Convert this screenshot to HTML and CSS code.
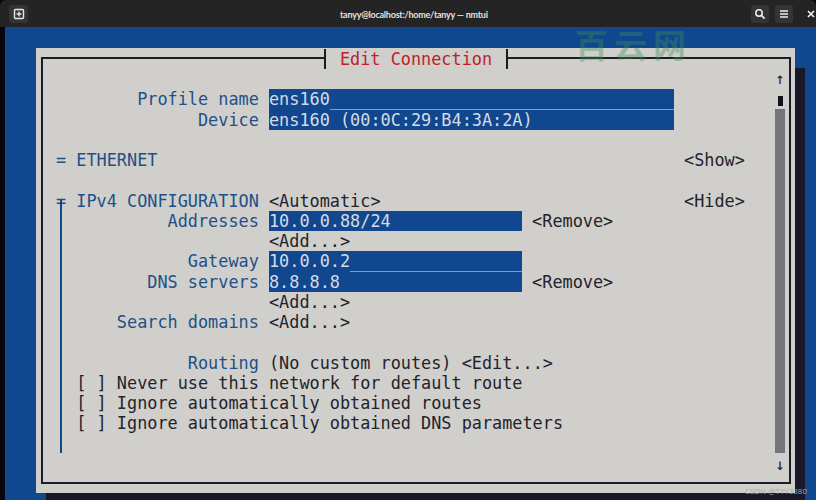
FILE: index.html
```html
<!DOCTYPE html>
<html lang="en">
<head>
<meta charset="utf-8">
<title>nmtui</title>
<link rel="stylesheet" href="styles.css">
</head>
<body>
<div class="window">
  <header class="titlebar">
    <button class="tbtn first">
      <svg width="12" height="12" viewBox="0 0 12 12"><rect x="1.5" y="1.5" width="9" height="9" rx="1" fill="none" stroke="#e8e8e8" stroke-width="1.4"/><path d="M6 3.6v4.8M3.6 6h4.8" stroke="#e8e8e8" stroke-width="1.4"/></svg>
    </button>
    <div class="wintitle">tanyy@localhost:/home/tanyy — nmtui</div>
    <div class="tools">
      <button class="tbtn">
        <svg width="12" height="12" viewBox="0 0 12 12"><circle cx="5" cy="5" r="3.2" fill="none" stroke="#eee" stroke-width="1.5"/><path d="M7.4 7.4l3.2 3.2" stroke="#eee" stroke-width="1.7"/></svg>
      </button>
      <button class="tbtn">
        <svg width="12" height="12" viewBox="0 0 12 12"><path d="M2 3h8M2 6h8M2 9h8" stroke="#eee" stroke-width="1.3"/></svg>
      </button>
      <svg class="close" width="10" height="10" viewBox="0 0 10 10"><path d="M2 2l6 6M8 2l-6 6" stroke="#eee" stroke-width="1.7"/></svg>
    </div>
  </header>
  <main class="terminal">
    <section class="dialog">
      <div class="frame">
        <h1 class="dtitle">Edit Connection</h1>
        <div class="form">
          <div class="rows">
<div class="row"></div>
<div class="row"><span class="lbl">        Profile name </span><span class="field w40"><span>ens160</span><span class="fill"></span></span></div>
<div class="row"><span class="lbl">              Device </span><span class="field w40"><span>ens160 (00:0C:29:B4:3A:2A)</span></span></div>
<div class="row"></div>
<div class="row"><span class="lbl">= ETHERNET</span><span class="right">&lt;Show&gt;</span></div>
<div class="row"></div>
<div class="row"><span class="lbl">= IPv4 CONFIGURATION </span>&lt;Automatic&gt;<span class="right">&lt;Hide&gt;</span></div>
<div class="row"><span class="lbl">           Addresses </span><span class="field w25"><span>10.0.0.88/24</span></span> &lt;Remove&gt;</div>
<div class="row">                     &lt;Add...&gt;</div>
<div class="row"><span class="lbl">             Gateway </span><span class="field w25"><span>10.0.0.2</span><span class="fill"></span></span></div>
<div class="row"><span class="lbl">         DNS servers </span><span class="field w25"><span>8.8.8.8</span></span> &lt;Remove&gt;</div>
<div class="row">                     &lt;Add...&gt;</div>
<div class="row"><span class="lbl">      Search domains </span>&lt;Add...&gt;</div>
<div class="row"></div>
<div class="row"><span class="lbl">             Routing </span>(No custom routes) &lt;Edit...&gt;</div>
<div class="row">  [ ] Never use this network for default route</div>
<div class="row">  [ ] Ignore automatically obtained routes</div>
<div class="row">  [ ] Ignore automatically obtained DNS parameters</div>
            <div class="branch"></div>
          </div>
          <div class="scroll">
            <div class="arrow">↑</div>
            <div class="track"><div class="thumb"></div><div class="bar"></div></div>
            <div class="arrow down">↓</div>
          </div>
        </div>
      </div>
    </section>
    <div class="watermark">百云网</div>
    <div class="credit">CSDN @TYY3380</div>
  </main>
</div>
</body>
</html>
```
FILE: styles.css
```css
* { box-sizing: border-box; }
html, body { margin: 0; height: 100%; background: #06060c; overflow: hidden; }
.window { width: 816px; height: 500px; display: flex; flex-direction: column; padding-left: 5px; overflow: hidden; }
.titlebar {
  height: 27px; flex: none; margin-left: -5px; background: #242424; border-radius: 6px 6px 0 0;
  display: flex; align-items: center; padding: 0 0 0 9px; position: relative;
  font-family: "Lato", sans-serif;
}
.tbtn {
  width: 18px; height: 18px; border: 0; padding: 0; border-radius: 3px; background: #343434;
  display: flex; align-items: center; justify-content: center;
}
.first { width: 19px; }
.wintitle {
  position: absolute; left: 340px; top: 8px; font-size: 9px; font-weight: 700; letter-spacing: -.24px;
  line-height: 13px; color: #e0e0e0; white-space: nowrap;
}
.tools { margin-left: auto; display: flex; align-items: center; gap: 6px; }
.close { margin-left: 7px; }
.terminal {
  flex: 1; background: #10478f; position: relative; padding: 21px 0 0 31px;
}
.dialog {
  width: 759px; height: 445px; background: #d0cfcb; padding: 9px 4px 9px 5px;
  box-shadow: 10px 20px 0 #191828;
}
.frame {
  height: 100%; border: 2px solid #1c1c24; position: relative; padding: 10px 0 0 13px;
}
.dtitle {
  position: absolute; left: 281px; top: -10px; margin: 0; width: 184px; height: 20px;
  background: #d0cfcb; border-left: 2px solid #1c1c24; border-right: 2px solid #1c1c24;
  font: 400 16.85px/20px "DejaVu Sans Mono", monospace; color: #c01c2c;
  text-align: center;
}
.form { display: flex; font: 400 16.85px/20.25px "DejaVu Sans Mono", monospace; color: #23232b; }
.rows { width: 719px; position: relative; }
.row { height: 20.25px; white-space: pre; position: relative; }
.lbl { color: #1f5088; }
.right { position: absolute; left: 628px; top: 0; }
.field {
  display: inline-flex; height: 20.25px; background: #10478f; color: #d6dbe4; vertical-align: top;
}
.w40 { width: 405px; }
.w25 { width: 253px; }
.fill { flex: 1; border-bottom: 1px solid #7f9fc6; }
.branch { position: absolute; left: 4px; top: 131px; width: 2px; height: 253px; background: #10478f; }
.scroll { width: 10px; display: flex; flex-direction: column; align-items: center; color: #23232b; }
.arrow { height: 20.25px; font-size: 16px; }
.down { margin-top: 2px; }
.track { height: 364px; display: flex; flex-direction: column; align-items: center; }
.thumb { width: 5px; height: 10px; margin-top: 7px; background: #111118; flex: none; }
.bar { width: 10px; height: 344px; margin-top: 3px; background: #76767a; flex: none; }
.watermark {
  position: absolute; left: 570px; top: 1px; font: 700 33px/33px "Noto Sans CJK SC", sans-serif;
  color: #3f8f5c; opacity: .38; letter-spacing: 6px; white-space: nowrap;
}
.credit {
  position: absolute; right: 9px; bottom: 4px; font: 400 8px/10px "Open Sans", sans-serif; color: #a6a6aa;
}
```
